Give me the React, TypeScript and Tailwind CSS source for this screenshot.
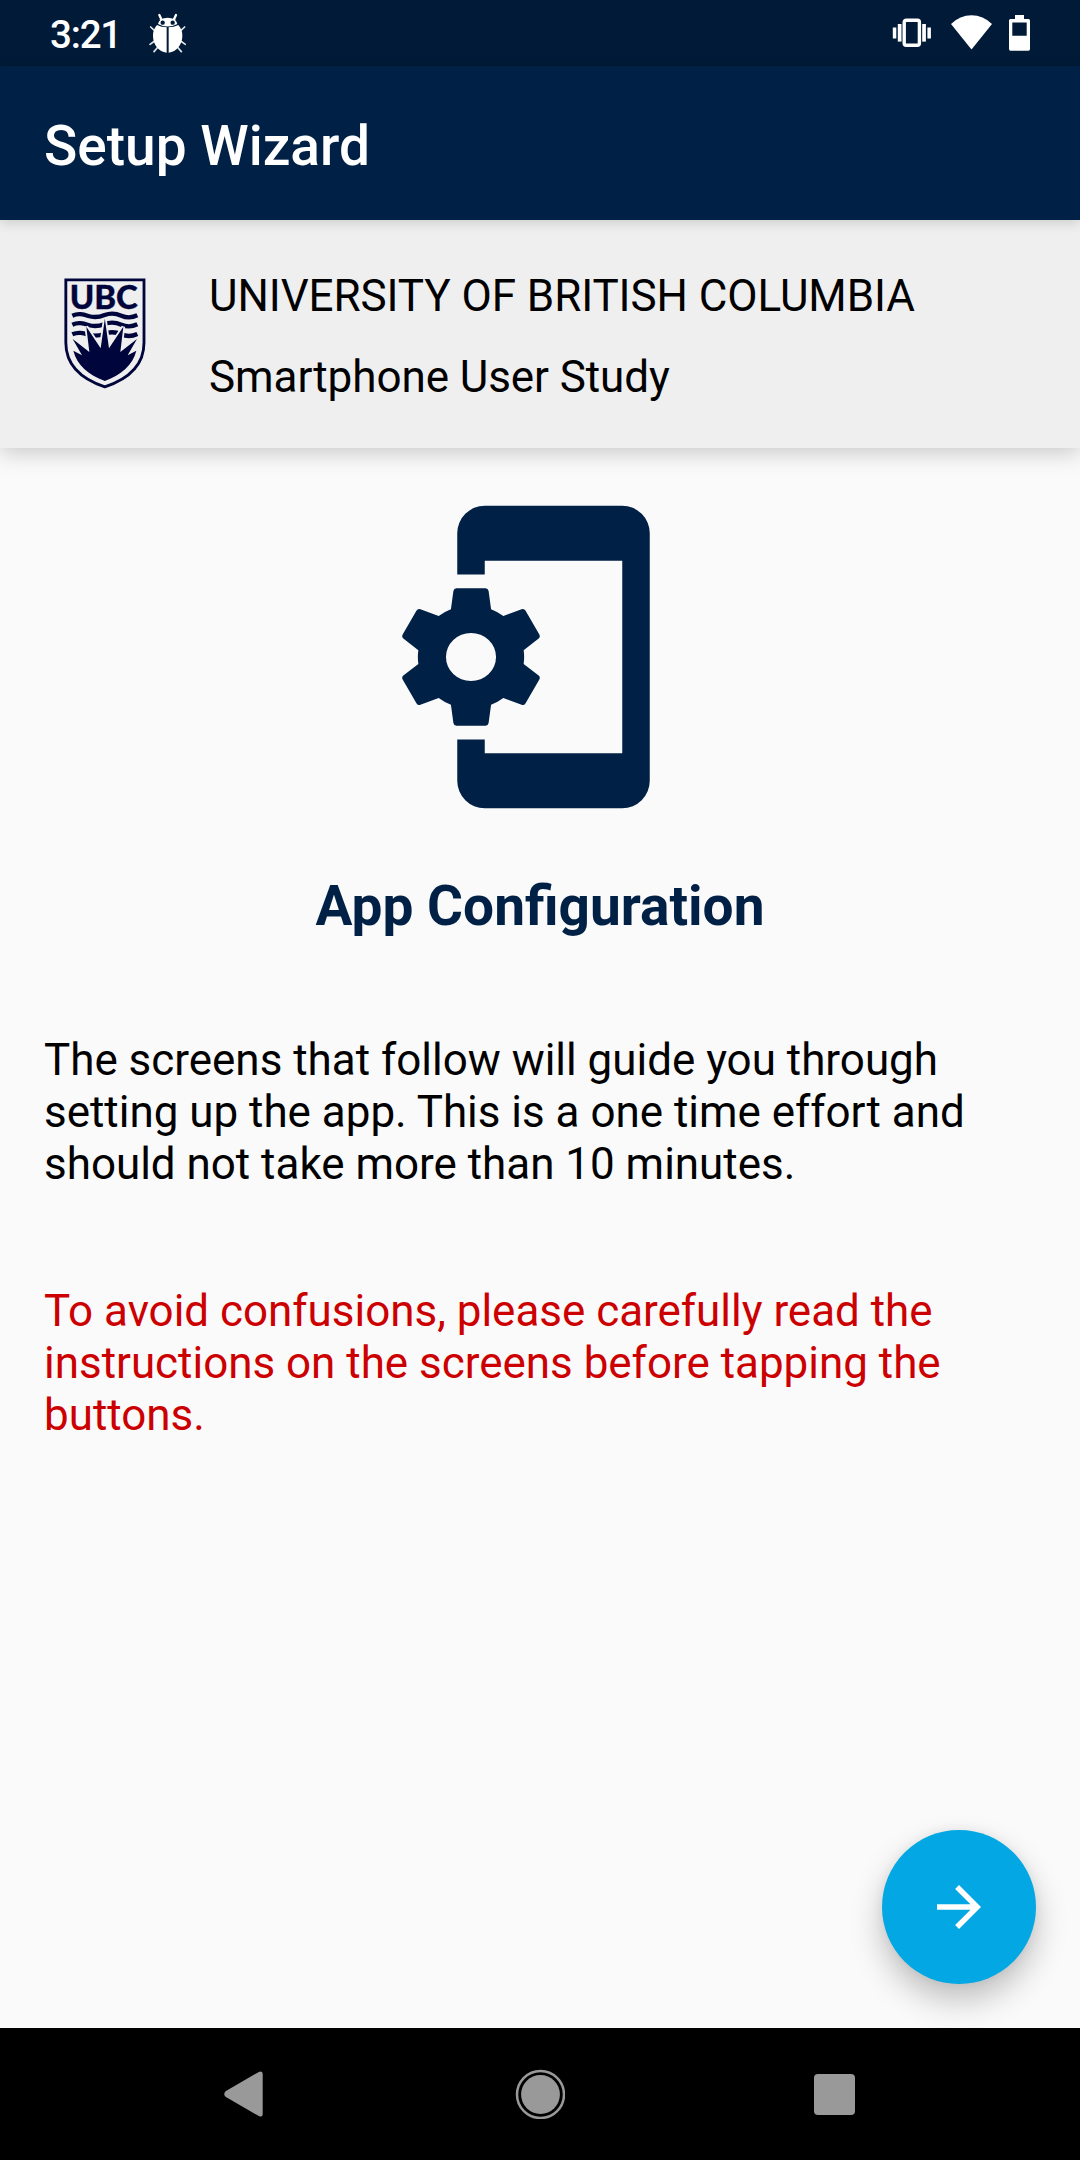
import React from "react";

function BugIcon() {
  return (
    <svg className="h-[40px] w-[38px]" viewBox="0 0 114 120" fill="none">
      <path
        d="M34 6l6 13M84 6l-6 13"
        stroke="#fff"
        strokeWidth="7"
        strokeLinecap="round"
      />
      <path
        d="M8 42l11 10M110 42l-11 10M6 94l14-10M112 94l-14-10M18 116l12-14M100 116l-12-14"
        stroke="#dfe4ea"
        strokeWidth="5"
        strokeLinecap="round"
      />
      <path d="M30 33Q34 14 59 14Q84 14 88 33Q59 48 30 33z" fill="#fff" />
      <circle cx="44" cy="29" r="6.5" fill="#001a37" />
      <circle cx="74" cy="29" r="6.5" fill="#001a37" />
      <path d="M27 36Q40 43 56 43V119C32 116 15 95 15 68Q15 49 27 36z" fill="#fff" />
      <path d="M91 36Q78 43 62 43V119C86 116 103 95 103 68Q103 49 91 36z" fill="#fff" />
    </svg>
  );
}

function StatusBar() {
  return (
    <div className="flex h-[66px] items-start bg-[#001a37]">
      <span className="ml-[50px] mt-[12px] w-[72px] whitespace-nowrap text-[38.5px] font-medium leading-[45px] tracking-[-1.2px]">
        3:21
      </span>
      <div className="ml-[26px] mt-[13px]">
        <BugIcon />
      </div>
      <svg className="ml-[706px] mt-[18px] h-[29px] w-[40px] shrink-0" viewBox="0 0 40 29" fill="#fff">
        <rect x="12.2" y="2.2" width="15.2" height="25" rx="2" fill="none" stroke="#fff" strokeWidth="3.4" />
        <rect x="0.8" y="9.5" width="3.5" height="11" />
        <rect x="5.8" y="6" width="3.7" height="17.6" />
        <rect x="30.2" y="6" width="3.7" height="17.6" />
        <rect x="35.4" y="9.5" width="3.5" height="11" />
      </svg>
      <svg className="ml-[19px] mt-[15px] h-[35px] w-[41px] shrink-0" viewBox="0 0 41 35" fill="#fff">
        <path d="M20.5 34.5L0 9Q9 0.3 20.5 0.3T41 9z" />
      </svg>
      <svg className="ml-[17px] mt-[15px] h-[36px] w-[21px] shrink-0" viewBox="0 0 21 36" fill="#fff">
        <path
          fillRule="evenodd"
          d="M6 0h9v4h4.500q1.500 0 1.500 1.500V34q0 1.700-1.500 1.700h-18Q0 35.700 0 34V5.500Q0 4 1.500 4H6zM3.300 7.500V20.700H17.700V7.500z"
        />
      </svg>
    </div>
  );
}

function UbcCrest() {
  return (
    <svg className="h-[111px] w-[82px] shrink-0" viewBox="41 38 246 333" fill="#00053c">
      <path
        d="M46.500 43.500H281V232C281 296 236 340 163.500 364.500C91 340 46.500 296 46.500 232z"
        fill="none"
        stroke="#00053c"
        strokeWidth="8.500"
      />
      <text
        x="58"
        y="130"
        textLength="204"
        lengthAdjust="spacingAndGlyphs"
        fontFamily="Lato, sans-serif"
        fontWeight="900"
        fontSize="94"
        stroke="#00053c"
        strokeWidth="1"
      >
        UBC
      </text>
      <g fill="none" stroke="#00053c" strokeWidth="13">
        <path d="M66 151C84 143 98 147 114 152S148 155 163 149S195 143 213 151S246 157 261 150" />
        <path d="M66 178C84 170 98 174 114 179S148 182 163 176S195 170 213 178S246 184 261 177" />
        <path d="M66 207C84 199 98 203 114 208S148 211 163 205S195 199 213 207S246 213 261 206" />
      </g>
      <path
        d="M163.500 160L176 249L219 184L210 260L260 221L232 270L258 256C247 300 213 328 163.500 347C114 328 80 300 69 256L95 270L67 221L117 260L108 184L151 249z"
        stroke="#efefef"
        strokeWidth="11"
        paintOrder="stroke"
      />
    </svg>
  );
}

function PhoneSetupIcon() {
  return (
    <svg className="h-[330px] w-[330px]" viewBox="0 0 24 24" fill="#002145">
      <path d="M7 3a2 2 0 0 1 2-2h10a2 2 0 0 1 2 2v18a2 2 0 0 1-2 2H9a2 2 0 0 1-2-2v-3h2v1h10V5H9v1H7z" />
      <path
        fillRule="evenodd"
        transform="translate(8 12)"
        d="M-1.060-5H1.060Q1.240-5 1.280-4.800L1.460-3.470Q1.930-3.290 2.350-2.980L3.680-3.480Q3.870-3.540 3.970-3.360L4.970-1.640Q5.060-1.460 4.920-1.350L3.830-.5Q3.900 0 3.830.5L4.920 1.350Q5.060 1.460 4.970 1.640L3.970 3.360Q3.870 3.540 3.680 3.480L2.350 2.980Q1.930 3.290 1.460 3.470L1.280 4.800Q1.240 5 1.060 5H-1.060Q-1.240 5-1.280 4.800L-1.460 3.470Q-1.930 3.290-2.350 2.980L-3.680 3.480Q-3.870 3.540-3.970 3.360L-4.970 1.640Q-5.060 1.460-4.920 1.350L-3.830.5Q-3.900 0-3.830-.5L-4.920-1.350Q-5.060-1.460-4.970-1.640L-3.970-3.360Q-3.870-3.540-3.680-3.480L-2.350-2.980Q-1.930-3.290-1.460-3.470L-1.280-4.800Q-1.240-5-1.060-5zM-1.820 0A1.820 1.750 0 1 0 1.820 0A1.820 1.750 0 1 0-1.820 0z"
      />
    </svg>
  );
}

function NavigationBar() {
  return (
    <nav className="flex h-[132px] shrink-0 items-center bg-black">
      <svg className="ml-[224px] h-[46px] w-[39px]" viewBox="0 0 39 46" fill="#999">
        <path d="M1.500 20.200L34.800 1Q38.700-.8 38.700 3V43Q38.700 46.800 34.800 45L1.500 25.800Q-1 23 1.500 20.200z" />
      </svg>
      <svg className="ml-[252px] h-[50px] w-[50px]" viewBox="0 0 50 50" fill="#999">
        <circle cx="25.500" cy="25.500" r="23.500" fill="none" stroke="#999" strokeWidth="2.500" />
        <circle cx="25.500" cy="25.500" r="19.400" />
      </svg>
      <div className="ml-[249px] mt-px h-[41px] w-[41px] rounded-[4px] bg-[#999]" />
    </nav>
  );
}

export default function App() {
  return (
    <div className="flex h-[2160px] w-[1080px] flex-col overflow-hidden bg-[#fafafa] font-['Roboto',sans-serif] text-white">
      <StatusBar />
      <header className="relative z-20 flex h-[154px] shrink-0 items-center bg-[#002145] px-[44px] pt-[5px] shadow-[0_2px_12px_rgba(0,0,0,0.16)]">
        <h1 className="text-[55px] font-medium leading-[64px]">Setup Wizard</h1>
      </header>

      <section className="relative z-10 flex h-[228px] shrink-0 items-start bg-[#efefef] pl-[64px] text-black shadow-[0_6px_20px_rgba(0,0,0,0.18)]">
        <div className="mt-[58px]">
          <UbcCrest />
        </div>
        <div className="ml-[63px] mt-[50px] flex flex-col gap-[29px] whitespace-nowrap text-[44px] leading-[52px] tracking-[-0.08px]">
          <p>UNIVERSITY OF BRITISH COLUMBIA</p>
          <p>Smartphone User Study</p>
        </div>
      </section>

      <main className="flex flex-1 flex-col px-[44px] pt-[44px]">
        <div className="flex justify-center pr-[27.5px]">
          <PhoneSetupIcon />
        </div>
        <h2 className="mt-[52px] text-center text-[55px] font-bold leading-[64px] text-[#002145]">
          App Configuration
        </h2>
        <p className="mt-[96px] text-[43.95px] leading-[52px] text-black">
          The screens that follow will guide you through
          <br />
          setting up the app. This is a one time effort and
          <br />
          should not take more than 10 minutes.
        </p>
        <p className="mt-[95px] text-[43.95px] leading-[52px] text-[#cc0000]">
          To avoid confusions, please carefully read the
          <br />
          instructions on the screens before tapping the
          <br />
          buttons.
        </p>
        <button
          aria-label="Next"
          className="mb-[44px] mt-auto flex size-[154px] items-center justify-center self-end rounded-full bg-[#02a7e3] shadow-[0_16px_32px_rgba(0,0,0,0.24),0_0_12px_rgba(0,0,0,0.06)]"
        >
          <svg className="size-[66px]" viewBox="0 0 24 24" fill="#fff">
            <path d="M12 4l-1.410 1.410L16.170 11H4v2h12.170l-5.580 5.590L12 20l8-8z" />
          </svg>
        </button>
      </main>
      <NavigationBar />
    </div>
  );
}
